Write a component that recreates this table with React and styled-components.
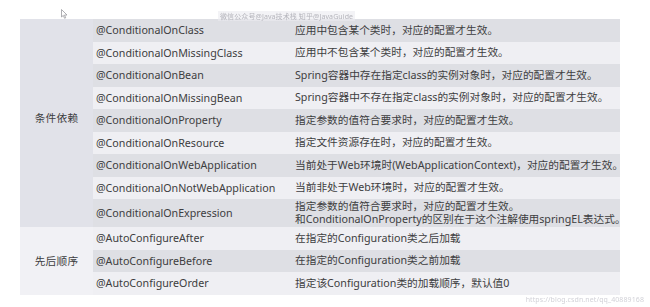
import styled, { createGlobalStyle } from 'styled-components';

const GlobalStyle = createGlobalStyle`
  html, body {
    margin: 0;
    padding: 0;
    background: #ffffff;
  }
  body {
    font-family: "Noto Sans", "Noto Sans CJK SC", sans-serif;
    color: #3d3d40;
  }
`

const Page = styled.div`
  position: relative;
  width: 650px;
  height: 307px;
  padding: 19px 0 0 20px;
  box-sizing: border-box;
  overflow: hidden;
`

const Table = styled.table`
  width: 600px;
  border-collapse: collapse;
  table-layout: fixed;
  font-size: 10.7px;
`

const Row = styled.tr`
  height: ${p => (p.tall ? 28 : 22.5)}px;
  background: ${p => (p.dark ? '#dedfe4' : '#efeff3')};
`

const GroupCell = styled.td`
  width: 73px;
  padding: 0 0 ${p => p.lift || 0}px;
  text-align: center;
  vertical-align: middle;
  background: ${p => p.bg};
  letter-spacing: 0.2px;
`

const NameCell = styled.td`
  width: 194px;
  padding: 0 0 0 3px;
  white-space: nowrap;
  vertical-align: middle;
`

const DescCell = styled.td`
  padding: 0 0 0 5px;
  white-space: nowrap;
  vertical-align: middle;
  line-height: 13px;
`

const Watermark = styled.div`
  position: absolute;
  font-size: ${p => p.size}px;
  color: ${p => p.color};
  white-space: nowrap;
  letter-spacing: 0.1px;
`

const TopMark = styled(Watermark)`
  left: 218px;
  top: 11px;
  background: rgba(235, 235, 240, 0.6);
  padding: 0 2px;
  filter: blur(0.4px);
`

const BottomMark = styled(Watermark)`
  right: 6px;
  bottom: 3px;
  filter: blur(0.3px);
`

const Cursor = styled.svg`
  position: absolute;
  left: 61px;
  top: 9px;
`

const conditions = [
  ['@ConditionalOnClass', '应用中包含某个类时，对应的配置才生效。'],
  ['@ConditionalOnMissingClass', '应用中不包含某个类时，对应的配置才生效。'],
  ['@ConditionalOnBean', 'Spring容器中存在指定class的实例对象时，对应的配置才生效。'],
  ['@ConditionalOnMissingBean', 'Spring容器中不存在指定class的实例对象时，对应的配置才生效。'],
  ['@ConditionalOnProperty', '指定参数的值符合要求时，对应的配置才生效。'],
  ['@ConditionalOnResource', '指定文件资源存在时，对应的配置才生效。'],
  ['@ConditionalOnWebApplication', '当前处于Web环境时(WebApplicationContext)，对应的配置才生效。'],
  ['@ConditionalOnNotWebApplication', '当前非处于Web环境时，对应的配置才生效。'],
  [
    '@ConditionalOnExpression',
    ['指定参数的值符合要求时，对应的配置才生效。', '和ConditionalOnProperty的区别在于这个注解使用springEL表达式。'],
  ],
]

const order = [
  ['@AutoConfigureAfter', '在指定的Configuration类之后加载'],
  ['@AutoConfigureBefore', '在指定的Configuration类之前加载'],
  ['@AutoConfigureOrder', '指定该Configuration类的加载顺序，默认值0'],
]

function Desc({ text }) {
  if (Array.isArray(text)) {
    return (
      <DescCell>
        {text[0]}
        <br />
        {text[1]}
      </DescCell>
    )
  }
  return <DescCell>{text}</DescCell>
}

export default function App() {
  return (
    <>
      <GlobalStyle />
      <Page>
        <Cursor width="7" height="10" viewBox="0 0 7 10">
          <path d="M0.5 0.5 L0.5 8 L2.3 6.4 L3.6 9.3 L4.7 8.8 L3.5 6 L6 6 Z" fill="#fff" stroke="#9a9aa0" strokeWidth="0.8" />
        </Cursor>
        <TopMark size={7} color="#b4b4bb">微信公众号@Java技术栈 知乎@JavaGuide</TopMark>
        <Table>
          <tbody>
            {conditions.map(([name, text], i) => (
              <Row key={name} dark={i % 2 === 0} tall={Array.isArray(text)}>
                {i === 0 && (
                  <GroupCell rowSpan={conditions.length} bg="#e1e2e9" lift={12}>
                    条件依赖
                  </GroupCell>
                )}
                <NameCell>{name}</NameCell>
                <Desc text={text} />
              </Row>
            ))}
            {order.map(([name, text], i) => (
              <Row key={name} dark={i % 2 === 1}>
                {i === 0 && (
                  <GroupCell rowSpan={order.length} bg="#f1f1f5">
                    先后顺序
                  </GroupCell>
                )}
                <NameCell>{name}</NameCell>
                <Desc text={text} />
              </Row>
            ))}
          </tbody>
        </Table>
        <BottomMark size={7} color="#d2d2d8">https://blog.csdn.net/qq_40889168</BottomMark>
      </Page>
    </>
  )
}
